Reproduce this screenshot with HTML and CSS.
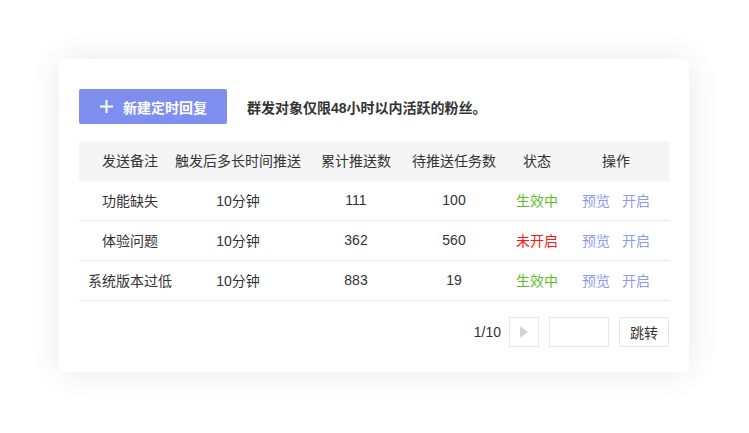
FILE: index.html
```html
<!DOCTYPE html>
<html lang="zh-CN">
<head>
    <meta charset="UTF-8">
    <title>定时回复</title>
    <link rel="stylesheet" href="styles.css">
</head>
<body>

<section class="panel">
    <div class="toolbar">
        <button type="button" class="add-btn">
            <svg class="add-icon" width="13" height="13" viewBox="0 0 13 13"><path d="M6.5 0v13M0 6.5h13" stroke="#fff" stroke-width="2"/></svg>
            新建定时回复
        </button>
        <span class="tip">群发对象仅限48小时以内活跃的粉丝。</span>
    </div>

    <div class="table">
        <div class="row head">
            <div class="cell">发送备注</div>
            <div class="cell">触发后多长时间推送</div>
            <div class="cell">累计推送数</div>
            <div class="cell">待推送任务数</div>
            <div class="cell">状态</div>
            <div class="cell">操作</div>
            <div></div>
        </div>
        <div class="row">
            <div class="cell">功能缺失</div>
            <div class="cell">10分钟</div>
            <div class="cell">111</div>
            <div class="cell">100</div>
            <div class="cell on">生效中</div>
            <div class="cell ops"><a>预览</a><a>开启</a></div>
            <div></div>
        </div>
        <div class="row">
            <div class="cell">体验问题</div>
            <div class="cell">10分钟</div>
            <div class="cell">362</div>
            <div class="cell">560</div>
            <div class="cell off">未开启</div>
            <div class="cell ops"><a>预览</a><a>开启</a></div>
            <div></div>
        </div>
        <div class="row">
            <div class="cell">系统版本过低</div>
            <div class="cell">10分钟</div>
            <div class="cell">883</div>
            <div class="cell">19</div>
            <div class="cell on">生效中</div>
            <div class="cell ops"><a>预览</a><a>开启</a></div>
            <div></div>
        </div>
    </div>

    <div class="pager">
        <span class="page-num">1/10</span>
        <button type="button" class="page-next"><svg width="8" height="12" viewBox="0 0 8 12"><path d="M0 0L8 6L0 12Z" fill="#d4d4d4"/></svg></button>
        <input type="text" class="page-input">
        <button type="button" class="page-go">跳转</button>
    </div>
</section>

</body>
</html>
```

FILE: styles.css
```css
body{ margin: 0; padding: 59px 0 60px 59px; background: #fff; font-family: "Liberation Sans", "Noto Sans CJK SC", sans-serif; font-size: 14px; color: #333;}
.panel{ width: 590px; padding: 30px 20px 25px; background: #fff; border-radius: 6px; box-shadow: 0 0 36px rgba(0,0,0,0.09);}
.toolbar{ display: flex; align-items: center; gap: 20px; height: 35px;}
.add-btn{ display: flex; align-items: center; gap: 10px; width: 148px; height: 35px; padding: 0 0 0 21px; border: 0; border-radius: 2px; background: #7f8ff0; color: #fff; font: inherit; font-size: 14px; font-weight: bold;}
.add-icon{ display: block;}
.tip{ font-weight: bold; color: #333;}

.table{ margin-top: 17px;}
.row{ display: grid; grid-template-columns: 102px 114px 122px 74px 92px 66px 1fr; height: 39px; border-bottom: 1px solid #e8e8e8; align-items: center;}
.row.head{ height: 40px; background: #f5f5f5; border-bottom: 0;}
.cell{ display: flex; justify-content: center; white-space: nowrap; margin-top: -2px;}
.on{ color: #5cbd2d;}
.off{ color: #ff1414;}
.ops{ gap: 12px;}
.ops a{ color: #8c9bf2; cursor: pointer;}

.pager{ display: flex; justify-content: flex-end; align-items: center; margin-top: 16px; height: 30px;}
.page-num{ margin-right: 8px;}
.page-next{ display: flex; align-items: center; justify-content: center; width: 30px; height: 30px; padding: 0; border: 1px solid #e6e6e6; background: #fff;}
.page-input{ box-sizing: border-box; width: 60px; height: 30px; margin-left: 10px; border: 1px solid #e6e6e6; outline: none;}
.page-go{ width: 50px; height: 30px; margin-left: 10px; padding: 0; border: 1px solid #e6e6e6; background: #fff; color: #333; font: inherit;}
```
